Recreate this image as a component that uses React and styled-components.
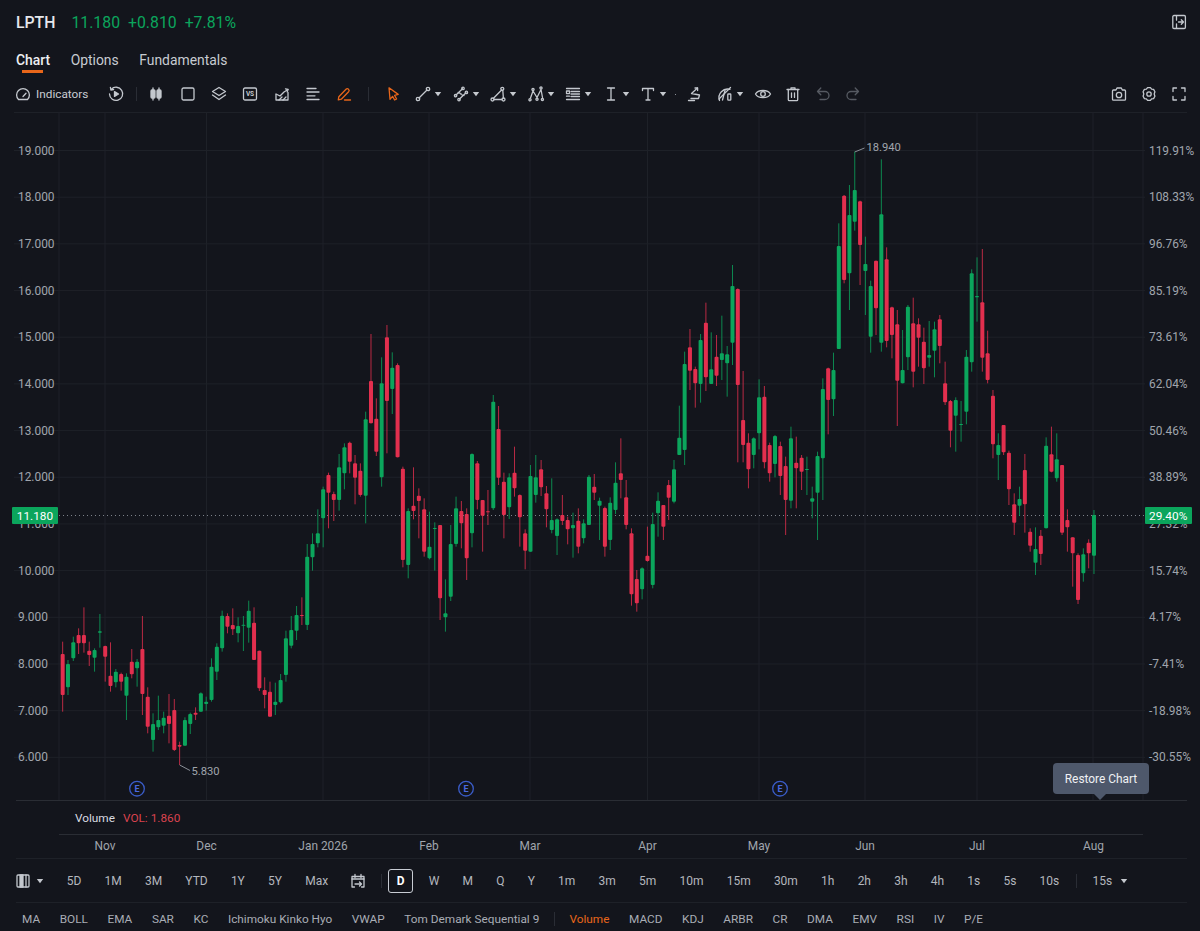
import React from 'react'
import styled, { createGlobalStyle } from 'styled-components'

const GREEN = '#0ba55c'
const RED = '#e22f4e'
const ORANGE = '#e8661a'
const MUTED = '#a0a5ad'
const GRID = '#1e2128'

const GlobalStyle = createGlobalStyle`
  html, body {
    margin: 0;
    background: #13151c;
  }
  body {
    font-family: Roboto, 'Liberation Sans', sans-serif;
  }
`

const Page = styled.div`
  width: 1200px;
  height: 931px;
  overflow: hidden;
  display: flex;
  flex-direction: column;
  background: #13151c;
  color: #c7cbd1;

  & > * {
    flex: none;
  }
`
const Header = styled.div`
  height: 44px;
  padding: 0 12px 0 16px;
  display: flex;
  align-items: center;
  gap: 8px;
  font-size: 15.8px;
`
const Symbol = styled.div`
  color: #e6e8ec;
  font-weight: 500;
  margin-right: 8px;
`
const Quote = styled.div`
  color: ${GREEN};
`
const HeaderEnd = styled.div`
  margin-left: auto;
  display: flex;
`
const Tabs = styled.div`
  height: 32px;
  padding-left: 16px;
  display: flex;
  align-items: center;
  gap: 20.5px;
  font-size: 13.9px;
`
const Tab = styled.div`
  position: relative;
  color: ${(p) => (p.$active ? '#eceef1' : '#c7cbd1')};
  font-weight: ${(p) => (p.$active ? 500 : 400)};

  ${(p) => p.$active && `
    &::after {
      content: '';
      position: absolute;
      left: 6px;
      right: 7px;
      top: 18px;
      height: 3px;
      background: ${ORANGE};
    }
  `}
`
const Toolbar = styled.div`
  height: 36px;
  padding: 0 12px 0 14px;
  display: flex;
  align-items: center;
`
const Indicators = styled.div`
  display: flex;
  align-items: center;
  gap: 4px;
  font-size: 11.8px;
  color: #c7cbd1;
  margin-right: 19px;
`
const ToolGroup = styled.div`
  display: flex;
  align-items: center;
  gap: ${(p) => p.$gap || 12}px;
`
const Glyph = styled.svg`
  width: 18px;
  height: 18px;
  flex: none;
  fill: none;
  stroke: currentColor;
  stroke-width: 1.3;
  stroke-linecap: round;
  stroke-linejoin: round;
  color: ${(p) => p.$color || '#c4c8ce'};
`
const Split = styled.div`
  width: 1px;
  height: 14px;
  background: #2a2d35;
  flex: none;
  margin: ${(p) => p.$margin};
`
const CaretTool = styled.div`
  display: flex;
  align-items: center;
  width: 25.5px;
`
const Caret = styled.svg`
  width: 8px;
  height: 8px;
  flex: none;
  margin-left: ${(p) => p.$offset ?? 2}px;
  fill: #c4c8ce;
`
const Pip = styled.div`
  width: 1px;
  height: 1px;
  background: #8b9097;
  margin: 0 -1.75px;
`
const ToolbarEnd = styled.div`
  margin-left: auto;
  display: flex;
  gap: 12px;
`
const ChartPane = styled.div`
  position: relative;
  height: 688px;
`
const ChartSvg = styled.svg`
  display: block;
  width: 1200px;
  height: 688px;
  font-size: 12px;
`
const AxisLabel = styled.text`
  fill: ${MUTED};
  font-size: 11.9px;
  dominant-baseline: central;
`
const NoteLabel = styled.text`
  fill: ${MUTED};
  font-size: 11.2px;
  dominant-baseline: central;
`
const TagLabel = styled.text`
  fill: #ffffff;
  font-size: 11.8px;
  dominant-baseline: central;
`
const EarningsLabel = styled.text`
  fill: #4a6ae0;
  font-size: 9px;
  font-weight: 700;
  dominant-baseline: central;
  text-anchor: middle;
`
const Tooltip = styled.div`
  position: absolute;
  left: 1053px;
  top: 651px;
  width: 96px;
  height: 31px;
  border-radius: 4px;
  background: #4e586b;
  color: #eef0f3;
  font-size: 11.9px;
  display: flex;
  align-items: center;
  justify-content: center;

  &::after {
    content: '';
    position: absolute;
    left: 41px;
    top: 31px;
    border: 6px solid transparent;
    border-top-color: #4e586b;
  }
`
const PaneRule = styled.div`
  height: 1px;
  margin: 0 13px 0 16px;
  background: #2a2d34;
`
const VolumeRow = styled.div`
  height: 33px;
  margin: 0 57px 0 59px;
  padding-left: 16px;
  border-bottom: 1px solid #2a2d34;
  display: flex;
  align-items: center;
  gap: 8px;
  font-size: 11.8px;
  color: #d8dbe0;
`
const VolumeValue = styled.span`
  color: #d9434f;
`
const TimeAxis = styled.div`
  height: 23px;
  margin: 0 13px 0 16px;
  border-bottom: 1px solid ${GRID};
`
const TimeSvg = styled.svg`
  display: block;
  margin-left: -16px;
  width: 1200px;
  height: 23px;
  overflow: visible;
`
const PeriodBar = styled.div`
  height: 43px;
  margin: 0 13px 0 16px;
  border-bottom: 1px solid ${GRID};
  display: flex;
  align-items: center;
  gap: 23.2px;
  font-size: 12px;
  color: #b3b7be;
`
const PanelPicker = styled.div`
  display: flex;
  align-items: center;
  margin: 0 -0.5px 0 -2px;
`
const Period = styled.div`
  ${(p) => p.$active && `
    padding: 4px 7.5px;
    margin: 0 -7.5px;
    border: 1px solid #c8ccd3;
    border-radius: 3px;
    color: #ffffff;
    font-weight: 700;
    line-height: 14px;
    box-sizing: border-box;
  `}
`
const CalendarSlot = styled.div`
  display: flex;
  margin: 0 2px 0 -2.5px;
`
const PeriodMore = styled.div`
  display: flex;
  align-items: center;
  gap: 8px;
`
const IndicatorBar = styled.div`
  height: 32px;
  padding-left: 22px;
  display: flex;
  align-items: center;
  gap: 19.6px;
  font-size: 11.8px;
  color: #a9adb5;
`
const IndicatorItem = styled.div`
  color: ${(p) => (p.$active ? ORANGE : 'inherit')};
`

const r = 0
const g = 1

// each block was read from one crop: y0 + value / 3 gives the page y
// [colour, wick top, body top, body bottom, wick bottom]
const BLOCKS = [
  {
    y0: 580,
    rows: [
      [r, 185, 222, 345, 395], [g, 240, 252, 322, 345], [g, 170, 187, 235, 243], [r, 145, 165, 190, 222],
      [r, 82, 165, 190, 218], [r, 185, 212, 225, 258], [g, 205, 210, 233, 275], [g, 102, 154, 158, 203],
      [r, 197, 198, 230, 305], [r, 187, 287, 318, 335], [g, 267, 275, 307, 322], [r, 278, 282, 305, 332],
      [g, 280, 290, 347, 420], [r, 207, 245, 283, 295], [g, 237, 245, 265, 320], [r, 108, 207, 342, 405],
      [r, 322, 350, 440, 460], [g, 400, 432, 480, 515], [g, 347, 420, 442, 450], [g, 395, 413, 437, 460],
      [r, 342, 407, 432, 490], [r, 357, 390, 510, 513], [r, 485, 495, 500, 555], [g, 412, 420, 497, 497],
      [g, 398, 402, 432, 462], [r, 382, 398, 404, 420], [g, 337, 340, 395, 395], [g, 350, 365, 372, 392],
      [g, 235, 260, 360, 365], [g, 190, 200, 275, 300], [g, 92, 107, 205, 215], [r, 100, 108, 140, 160],
      [r, 85, 135, 148, 165], [g, 112, 138, 160, 187], [g, 108, 134, 137, 213], [g, 62, 92, 143, 188],
      [r, 82, 128, 240, 240], [r, 212, 212, 325, 333], [r, 292, 330, 345, 385], [r, 305, 335, 410, 410],
      [g, 308, 365, 375, 405], [g, 282, 300, 367, 370], [g, 152, 175, 285, 305], [g, 108, 150, 197, 205],
      [g, 78, 105, 152, 180], [r, 52, 105, 108, 135],
    ],
  },
  {
    y0: 320,
    rows: [
      [g, 672, 710, 915, 930], [g, 640, 672, 712, 752], [g, 568, 640, 670, 682], [g, 500, 508, 595, 682],
      [r, 458, 465, 518, 625], [r, 515, 522, 540, 603], [g, 402, 442, 540, 572], [g, 370, 382, 460, 508],
      [r, 365, 368, 425, 460], [r, 405, 430, 473, 553], [r, 430, 452, 525, 530], [g, 275, 298, 527, 610],
      [r, 42, 183, 310, 310], [r, 235, 296, 395, 408], [g, 112, 190, 472, 500], [r, 15, 52, 243, 400],
      [g, 97, 143, 207, 282], [r, 130, 135, 412, 412], [r, 440, 446, 720, 742], [g, 565, 573, 735, 775],
      [r, 442, 557, 573, 598], [r, 505, 527, 543, 655], [r, 535, 568, 695, 710], [g, 575, 680, 715, 718],
      [g, 607, 624, 627, 752], [r, 615, 615, 835, 900], [g, 778, 880, 892, 935], [g, 615, 672, 830, 843],
      [g, 530, 565, 672, 680], [r, 543, 573, 610, 685], [r, 565, 582, 715, 780], [g, 400, 402, 640, 682],
      [r, 423, 430, 540, 568], [r, 540, 540, 587, 695], [r, 510, 574, 577, 615], [g, 225, 245, 565, 570],
      [r, 258, 327, 473, 495], [r, 458, 485, 585, 655], [g, 460, 472, 562, 597], [r, 380, 458, 505, 530],
      [r, 523, 525, 592, 680], [r, 628, 640, 692, 748], [g, 435, 468, 695, 695], [g, 405, 472, 525, 548],
    ],
  },
  {
    y0: 260,
    rows: [
      [r, 600, 628, 682, 708], [r, 678, 700, 748, 802], [g, 655, 780, 810, 820], [g, 775, 778, 828, 885],
      [r, 705, 765, 783, 795], [r, 770, 780, 808, 853], [g, 758, 795, 805, 893], [r, 745, 782, 860, 880],
      [g, 778, 790, 835, 850], [g, 645, 650, 795, 795], [r, 642, 680, 698, 720], [g, 713, 722, 737, 840],
      [r, 740, 744, 860, 890], [g, 712, 728, 840, 870], [g, 607, 668, 750, 762], [r, 535, 640, 660, 715],
      [r, 660, 712, 795, 808], [r, 805, 820, 1003, 1037], [r, 930, 957, 1030, 1055], [g, 922, 925, 988, 1018],
      [r, 800, 887, 903, 905], [g, 758, 792, 975, 985], [g, 697, 722, 760, 830], [r, 735, 735, 800, 840],
      [r, 660, 675, 713, 780], [g, 600, 628, 725, 730], [g, 437, 533, 585, 585], [g, 275, 312, 570, 615],
      [r, 207, 262, 332, 390], [r, 320, 327, 370, 443], [g, 222, 240, 372, 428], [r, 128, 188, 352, 393],
      [g, 217, 328, 372, 372], [r, 225, 290, 347, 378], [g, 167, 280, 300, 360], [g, 258, 283, 310, 410],
      [g, 15, 78, 248, 315], [r, 85, 87, 375, 607], [r, 333, 480, 555, 607], [r, 520, 548, 628, 685],
      [g, 532, 535, 585, 625], [g, 358, 412, 520, 568], [r, 378, 410, 607, 625], [r, 548, 555, 640, 665],
      [g, 525, 528, 612, 652],
    ],
  },
  {
    y0: 140,
    rows: [
      [r, 905, 918, 1008, 1065], [r, 950, 978, 1080, 1185], [g, 860, 895, 1082, 1105], [r, 890, 968, 985, 1105],
      [r, 945, 953, 995, 1050], [g, 950, 987, 990, 1065], [g, 1040, 1075, 1085, 1135], [g, 935, 948, 1058, 1200],
      [g, 715, 747, 955, 1080], [r, 683, 685, 780, 883], [g, 638, 690, 778, 828], [g, 250, 318, 627, 627],
      [r, 165, 167, 420, 430], [g, 135, 225, 400, 510], [g, 35, 150, 245, 272], [r, 182, 184, 315, 435],
      [g, 290, 372, 393, 525], [g, 422, 438, 590, 638], [r, 362, 362, 505, 585], [g, 58, 223, 608, 635],
      [r, 322, 358, 603, 622], [r, 500, 502, 585, 655], [r, 510, 553, 722, 858], [g, 570, 690, 730, 730],
      [g, 495, 500, 652, 690], [r, 473, 550, 695, 742], [r, 535, 553, 593, 680], [r, 563, 605, 685, 732],
      [g, 543, 645, 653, 680], [g, 545, 568, 632, 712],
    ],
  },
  {
    y0: 240,
    rows: [
      [r, 225, 238, 318, 370], [r, 365, 430, 487, 495], [r, 480, 483, 572, 622], [g, 472, 480, 527, 635],
      [g, 483, 552, 555, 605], [g, 330, 350, 515, 553], [g, 88, 100, 367, 395], [g, 52, 168, 172, 245],
      [r, 27, 187, 353, 395], [r, 272, 340, 420, 430], [r, 450, 467, 613, 655], [g, 580, 615, 645, 720],
      [r, 555, 555, 637, 645], [r, 632, 638, 748, 795], [r, 760, 793, 848, 885], [g, 740, 777, 797, 828],
      [r, 642, 690, 793, 878], [r, 865, 875, 917, 935], [g, 862, 927, 968, 1005], [r, 870, 887, 942, 975],
      [g, 592, 617, 865, 865], [r, 560, 643, 695, 697], [g, 580, 658, 715, 725], [r, 675, 675, 878, 885],
      [r, 808, 840, 862, 935], [r, 892, 892, 940, 1040], [r, 940, 945, 1080, 1092], [g, 925, 943, 1000, 1025],
      [r, 898, 908, 940, 985], [g, 810, 825, 947, 1002],
    ],
  },
]

const CANDLES = BLOCKS.flatMap(({ y0, rows }) =>
  rows.map(([up, wt, bt, bb, wb]) => ({
    up: up === g,
    wickTop: y0 + wt / 3,
    bodyTop: y0 + bt / 3,
    bodyBottom: y0 + bb / 3,
    wickBottom: y0 + wb / 3,
  })),
)

const PRICES = ['19.000', '18.000', '17.000', '16.000', '15.000', '14.000', '13.000', '12.000', '11.000', '10.000', '9.000', '8.000', '7.000', '6.000']
const PERCENTS = ['119.91%', '108.33%', '96.76%', '85.19%', '73.61%', '62.04%', '50.46%', '38.89%', '27.32%', '15.74%', '4.17%', '-7.41%', '-18.98%', '-30.55%']
const MONTHS = [[105, 'Nov'], [206.5, 'Dec'], [323, 'Jan 2026'], [429, 'Feb'], [530, 'Mar'], [647.5, 'Apr'], [759, 'May'], [865, 'Jun'], [977, 'Jul'], [1093.5, 'Aug']]
const priceY = (i) => 150.5 + i * 46.68
const PERIODS_A = ['5D', '1M', '3M', 'YTD', '1Y', '5Y', 'Max']
const PERIODS_B = ['W', 'M', 'Q', 'Y', '1m', '3m', '5m', '10m', '15m', '30m', '1h', '2h', '3h', '4h', '1s', '5s', '10s']
const OVERLAYS = ['MA', 'BOLL', 'EMA', 'SAR', 'KC', 'Ichimoku Kinko Hyo', 'VWAP', 'Tom Demark Sequential 9']
const STUDIES = ['MACD', 'KDJ', 'ARBR', 'CR', 'DMA', 'EMV', 'RSI', 'IV', 'P/E']

const Icon = ({ color, children }) => (
  <Glyph viewBox="0 0 18 18" $color={color}>{children}</Glyph>
)
const DownCaret = ({ offset }) => (
  <Caret viewBox="0 0 8 8" $offset={offset}><path d="M.8 2h6.4L4 6.2z" /></Caret>
)

const Dots = ({ points, radius = 1.5 }) =>
  points.map(([cx, cy]) => <circle key={`${cx}-${cy}`} cx={cx} cy={cy} r={radius} />)

const DRAW_TOOLS = [
  <>
    <path d="M5 13 13 5" />
    <Dots points={[[4, 14], [14, 4]]} radius={1.7} />
  </>,
  <>
    <path d="M4 10 10.5 3.8M7.5 14l6.5-6.2M6 7.5l3 1M9 9.5l3 1" />
    <Dots points={[[3.6, 10.6], [11, 3.4], [7, 14.6], [14.4, 7.4]]} radius={1.2} />
  </>,
  <>
    <path d="M5 14.5h8M4.5 13.2 12.6 5M13.8 5.2l.6 8" />
    <Dots points={[[3.5, 14.5], [14.5, 14.5], [13.3, 3.8]]} />
  </>,
  <>
    <path d="M3.5 13 6 6l4 6.5L14 4.5l1.5 8" />
    <Dots points={[[3, 14.8], [6, 4.4], [10, 14.2], [14, 3], [15.4, 14.4]]} radius={1.1} />
  </>,
  <>
    <path d="M2.5 3.5h13M7 6.5h8.5M7 9h8.5M7 11.5h8.5M2.5 14.5h13" />
    <rect x="2.5" y="6" width="3" height="2.6" />
    <path d="M2.5 11.2h3" />
  </>,
  <path d="M5.5 3h7M9 3v12M5.5 15h7" />,
  <path d="M3.5 5.5v-2h11v2M9 3.5V15M7 15h4" />,
]

const Chart = () => (
  <ChartSvg viewBox="0 112 1200 688">
    <path d="M14 112.5H1187" stroke={GRID} />
    {[59, 105, 206.5, 323, 429, 530, 647.5, 759, 865, 977, 1093, 1143].map((x) => (
      <path key={x} d={`M${x} 112V800`} stroke={GRID} />
    ))}
    {PRICES.map((_, i) => (
      <path key={i} d={`M14 ${priceY(i)}H1145`} stroke={GRID} />
    ))}
    <path d="M59 515.5H1145" stroke="#7d828a" strokeDasharray="1 3" />
    {CANDLES.map((c, i) => {
      const x = 62.67 + i * 5.316
      const color = c.up ? GREEN : RED
      return (
        <g key={i}>
          <path d={`M${x} ${c.wickTop}V${c.wickBottom}`} stroke={color} strokeOpacity="0.8" />
          <rect
            x={x - 2}
            y={c.bodyTop}
            width="4"
            height={Math.max(c.bodyBottom - c.bodyTop, 1)}
            rx="1"
            fill={color}
          />
        </g>
      )
    })}
    <path d="M854.7 152 864.5 148" stroke="#8a8f97" fill="none" />
    <NoteLabel x="866.5" y="147.5">18.940</NoteLabel>
    <path d="M179.7 765 190 770.5" stroke="#8a8f97" fill="none" />
    <NoteLabel x="191.5" y="771">5.830</NoteLabel>
    {PRICES.map((label, i) => (
      <AxisLabel key={label} x="18" y={priceY(i)}>{label}</AxisLabel>
    ))}
    {PERCENTS.map((label, i) => (
      <AxisLabel key={label} x="1149" y={priceY(i)}>{label}</AxisLabel>
    ))}
    <rect x="12" y="507" width="46" height="17" rx="1" fill={GREEN} />
    <TagLabel x="35" y="515.5" textAnchor="middle">11.180</TagLabel>
    <rect x="1145" y="507" width="47" height="17" rx="1" fill={GREEN} />
    <TagLabel x="1149" y="515.5">29.40%</TagLabel>
    {[137, 466, 780].map((x) => (
      <g key={x}>
        <circle cx={x} cy="788.7" r="7.3" fill="none" stroke="#3a5cc8" strokeWidth="1.3" />
        <EarningsLabel x={x} y="789">E</EarningsLabel>
      </g>
    ))}
  </ChartSvg>
)

export default function App() {
  return (
    <Page>
      <GlobalStyle />
      <Header>
        <Symbol>LPTH</Symbol>
        <Quote>11.180</Quote>
        <Quote>+0.810</Quote>
        <Quote>+7.81%</Quote>
        <HeaderEnd>
          <Icon>
            <rect x="2.8" y="2.5" width="12.6" height="13" rx="1.2" />
            <path d="M6.5 3v4.2M6.5 10.8V15M8.5 9h5M11.3 6.8 13.5 9l-2.2 2.2" />
          </Icon>
        </HeaderEnd>
      </Header>
      <Tabs>
        <Tab $active>Chart</Tab>
        <Tab>Options</Tab>
        <Tab>Fundamentals</Tab>
      </Tabs>
      <Toolbar>
        <Indicators>
          <Icon>
            <path d="M4.5 14.5a6.4 6.4 0 1 1 9 0z" />
            <path d="M9 11.5l3-3.2" />
          </Icon>
          Indicators
        </Indicators>
        <ToolGroup>
          <Icon>
            <path d="M4.2 4.4A6.6 6.6 0 1 1 2.5 9" />
            <path d="M3.4 2.4 4 5l2.6-.5" />
            <path d="M7.5 6.6 11.5 9l-4 2.4z" fill="currentColor" />
          </Icon>
        </ToolGroup>
        <Split $margin="0 10.5px" />
        <ToolGroup $gap={13.3}>
          <Icon>
            <path d="M6 3v12M12 3v12" />
            <rect x="4" y="5" width="4" height="8" rx="1" fill="currentColor" />
            <rect x="10" y="5" width="4" height="8" rx="1" fill="currentColor" />
          </Icon>
          <Icon><rect x="3" y="3" width="12" height="12" rx="1.5" /></Icon>
          <Icon>
            <path d="M9 2.5 15.5 6.5 9 10.5 2.5 6.5z" />
            <path d="M2.5 10 9 14.5 15.5 10" />
          </Icon>
          <Icon>
            <rect x="2.5" y="3" width="13" height="12" rx="1.5" />
            <text x="9" y="11.3" textAnchor="middle" fontSize="6.5" fontWeight="700" fill="currentColor" stroke="none">VS</text>
          </Icon>
          <Icon>
            <path d="M3 9.5V15h12V7.5" />
            <path d="M3 9l4 2 4-4 4-2.5" />
            <path d="M12.5 3.8 15 4.5l-.8 2.4" />
            <path d="M6 15l3-3M10 15l3-3" />
          </Icon>
          <Icon><path d="M3 3.5h9M3 7h12M3 10.8h8M3 14.5h12" /></Icon>
          <Icon color={ORANGE}>
            <path d="M3.8 11.8 11 4.3a1.7 1.7 0 0 1 2.6 2.4l-7.3 7.5-3 .6z" />
            <path d="M9.5 15h6" />
          </Icon>
        </ToolGroup>
        <Split $margin="0 15px" />
        <ToolGroup>
          <Icon color={ORANGE}>
            <path d="M5 2.8 14.2 9.4l-3.6 1 2 3.6-2 1-2-3.6L6 14.2z" />
          </Icon>
          {DRAW_TOOLS.map((drawing, i) => (
            <CaretTool key={i}>
              <Icon>{drawing}</Icon>
              <DownCaret />
            </CaretTool>
          ))}
          <Pip />
          <Icon>
            <path d="M11.5 3 5.5 8.5 13.5 10l-1 3.5H5" />
            <path d="M2.5 15.5h6" />
            <path d="M9 3h2.6v2.6" />
          </Icon>
          <CaretTool>
            <Icon>
              <path d="M3.5 15.5A8.6 8.6 0 0 1 14 4.4" />
              <path d="M3 14 14.5 2.5" />
              <path d="M9 5.5 6.5 15" />
              <rect x="11.8" y="9" width="3" height="6.2" rx=".6" />
            </Icon>
            <DownCaret />
          </CaretTool>
          <Icon>
            <path d="M1.5 9c2.5-4.7 12.5-4.7 15 0-2.5 4.7-12.5 4.7-15 0z" />
            <circle cx="9" cy="9" r="2.3" />
          </Icon>
          <Icon>
            <path d="M3 4.5h12M7 4.5V2.8h4v1.7" />
            <path d="M4.3 4.5v10.2a.9.9 0 0 0 .9.9h7.6a.9.9 0 0 0 .9-.9V4.5" />
            <path d="M7.5 7.8v4.6M10.5 7.8v4.6" />
          </Icon>
          <Icon color="#565a62">
            <path d="M3.5 6.5 6.8 3M3.5 6.5l3.3 3.3M3.5 6.5H11a4 4 0 0 1 0 8H6" />
          </Icon>
          <Icon color="#565a62">
            <path d="M14.5 6.5 11.2 3M14.5 6.5l-3.3 3.3M14.5 6.5H7a4 4 0 0 0 0 8h5" />
          </Icon>
        </ToolGroup>
        <ToolbarEnd>
          <Icon>
            <path d="M2.5 6a1 1 0 0 1 1-1H6l1-2h4.3l1 2h2.2a1 1 0 0 1 1 1v8.2a1 1 0 0 1-1 1h-11a1 1 0 0 1-1-1z" />
            <circle cx="9" cy="10" r="2.7" />
          </Icon>
          <Icon>
            <path d="M7.6 2.6h2.8l1.2 1.5 2 .3 1.3 2.3-.7 2.3.7 2.3-1.3 2.3-2 .3-1.2 1.5H7.6l-1.2-1.5-2-.3-1.3-2.3.7-2.3-.7-2.3 1.3-2.3 2-.3z" />
            <circle cx="9" cy="9" r="2.2" />
          </Icon>
          <Icon><path d="M3 6.5V3h3.5M11.5 3H15v3.5M15 11.5V15h-3.5M6.5 15H3v-3.5" /></Icon>
        </ToolbarEnd>
      </Toolbar>
      <ChartPane>
        <Chart />
        <Tooltip>Restore Chart</Tooltip>
      </ChartPane>
      <PaneRule />
      <VolumeRow>
        Volume
        <VolumeValue>VOL: 1.860</VolumeValue>
      </VolumeRow>
      <TimeAxis>
        <TimeSvg viewBox="0 0 1200 23">
          {MONTHS.map(([x, label]) => (
            <AxisLabel key={label} x={x} y="11" textAnchor="middle">{label}</AxisLabel>
          ))}
        </TimeSvg>
      </TimeAxis>
      <PeriodBar>
        <PanelPicker>
          <Icon>
            <rect x="3" y="3" width="12" height="12" rx="1" />
            <rect x="6" y="3" width="3" height="12" fill="currentColor" />
            <path d="M12 3v12" />
          </Icon>
          <DownCaret offset={4} />
        </PanelPicker>
        {PERIODS_A.map((label) => <Period key={label}>{label}</Period>)}
        <CalendarSlot>
          <Icon>
            <path d="M3 7V4.5h12V7M3 7h12M6 2.5v3M12 2.5v3" />
            <path d="M3 7v8h2.5M15 7v8h-2.5" />
            <path d="M6 12h6M10.5 10l2 2-2 2" />
          </Icon>
        </CalendarSlot>
        <Split $margin="0 -9.5px 0 -11px" />
        <Period $active>D</Period>
        {PERIODS_B.map((label) => <Period key={label}>{label}</Period>)}
        <Split $margin="0 -8px 0 -6px" />
        <PeriodMore>
          15s
          <DownCaret offset={0} />
        </PeriodMore>
      </PeriodBar>
      <IndicatorBar>
        {OVERLAYS.map((label) => <IndicatorItem key={label}>{label}</IndicatorItem>)}
        <Split $margin="0 -5px" />
        <IndicatorItem $active>Volume</IndicatorItem>
        {STUDIES.map((label) => <IndicatorItem key={label}>{label}</IndicatorItem>)}
      </IndicatorBar>
    </Page>
  )
}
